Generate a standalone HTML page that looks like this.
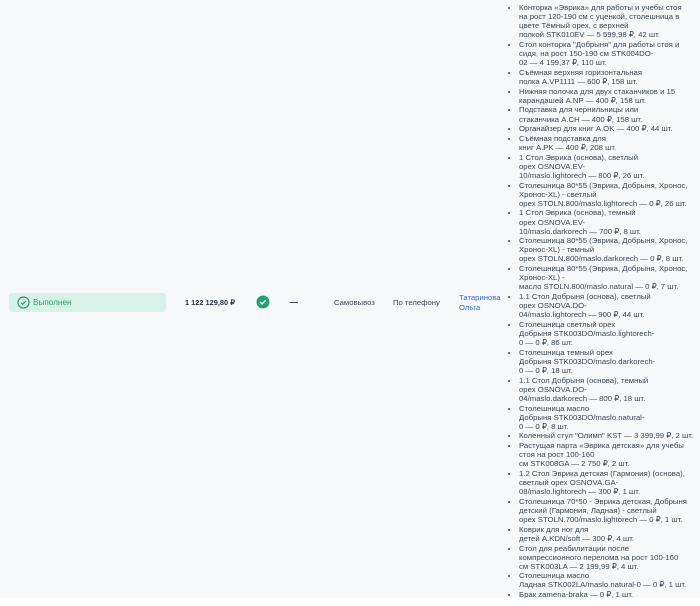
<!DOCTYPE html>
<html><head><meta charset="utf-8"><style>
html,body{margin:0;padding:0;width:700px;height:606px;overflow:hidden;background:#fff;font-family:"Liberation Sans","Noto Sans CJK SC",sans-serif;}
.row{position:absolute;left:0;top:0;width:700px;height:598px;background:#f7f8fa;overflow:hidden;}
.t{position:absolute;font-size:7.7px;color:#3b4654;white-space:nowrap;}
ul{position:absolute;left:507px;top:3px;margin:0;padding:0 0 0 12px;font-size:7.75px;line-height:9.1px;color:#3b4654;white-space:nowrap;}
li{margin:0 0 0.6px 0;}
</style></head><body>
<div class="row">
<div style="position:absolute;left:9px;top:293px;width:157px;height:19px;background:#d8f2e9;border-radius:3px;"></div>
<svg style="position:absolute;left:17px;top:296px" width="13" height="13" viewBox="0 0 13 13"><circle cx="6.5" cy="6.5" r="5.5" fill="none" stroke="#2a9d6f" stroke-width="1.2"/><path d="M4 6.7l1.7 1.7 3.3-3.4" fill="none" stroke="#2a9d6f" stroke-width="1.2"/></svg>
<div class="t" style="left:33px;top:298px;color:#2f9a6c;font-size:8.2px">Выполнен</div>
<div class="t" style="left:185px;top:298px;font-weight:bold;color:#2d3540;font-size:7.4px">1 122 129,80 ₽</div>
<svg style="position:absolute;left:256px;top:295px" width="14" height="14" viewBox="0 0 14 14"><circle cx="7" cy="7" r="6.5" fill="#27a174"/><path d="M4.3 7.1l1.9 1.8 3.5-3.6" fill="none" stroke="#fff" stroke-width="1.4"/></svg>
<div style="position:absolute;left:290px;top:302px;width:8px;height:1.3px;background:#3b4654"></div>
<div class="t" style="left:334px;top:298px">Самовывоз</div>
<div class="t" style="left:393px;top:298px">По телефону</div>
<div class="t" style="left:459px;top:293px;color:#3d6cc8;line-height:10px">Татаринова<br>Ольга</div>
<ul>
<li>Конторка «Эврика» для работы и учебы стоя<br>на рост 120-190 см с уценкой, столешница в<br>цвете Тёмный орех, с верхней<br>полкой STK010EV — 5 599,98 ₽, 42 шт.</li>
<li>Стол конторка "Добрыня" для работы стоя и<br>сидя, на рост 150-190 см STK004DO-<br>02 — 4 199,37 ₽, 110 шт.</li>
<li>Съёмная верхняя горизонтальная<br>полка A.VP1111 — 600 ₽, 158 шт.</li>
<li>Нижняя полочка для двух стаканчиков и 15<br>карандашей A.NP — 400 ₽, 158 шт.</li>
<li>Подставка для чернильницы или<br>стаканчика A.CH — 400 ₽, 158 шт.</li>
<li>Органайзер для книг A.OK — 400 ₽, 44 шт.</li>
<li>Съёмная подставка для<br>книг A.PK — 400 ₽, 208 шт.</li>
<li>1 Стол Эврика (основа), светлый<br>орех OSNOVA.EV-<br>10/maslo.lightorech — 800 ₽, 26 шт.</li>
<li>Столешница 80*55 (Эврика, Добрыня, Хронос,<br>Хронос-XL) - светлый<br>орех STOLN.800/maslo.lightorech — 0 ₽, 26 шт.</li>
<li>1 Стол Эврика (основа), темный<br>орех OSNOVA.EV-<br>10/maslo.darkorech — 700 ₽, 8 шт.</li>
<li>Столешница 80*55 (Эврика, Добрыня, Хронос,<br>Хронос-XL) - темный<br>орех STOLN.800/maslo.darkorech — 0 ₽, 8 шт.</li>
<li>Столешница 80*55 (Эврика, Добрыня, Хронос,<br>Хронос-XL) -<br>масло STOLN.800/maslo.natural — 0 ₽, 7 шт.</li>
<li>1.1 Стол Добрыня (основа), светлый<br>орех OSNOVA.DO-<br>04/maslo.lightorech — 900 ₽, 44 шт.</li>
<li>Столешница светлый орех<br>Добрыня STK003DO/maslo.lightorech-<br>0 — 0 ₽, 86 шт.</li>
<li>Столешница темный орех<br>Добрыня STK003DO/maslo.darkorech-<br>0 — 0 ₽, 18 шт.</li>
<li>1.1 Стол Добрыня (основа), темный<br>орех OSNOVA.DO-<br>04/maslo.darkorech — 800 ₽, 18 шт.</li>
<li>Столешница масло<br>Добрыня STK003DO/maslo.natural-<br>0 — 0 ₽, 8 шт.</li>
<li>Коленный стул "Олимп" KST — 3 399,99 ₽, 2 шт.</li>
<li>Растущая парта «Эврика детская» для учебы<br>стоя на рост 100-160<br>см STK008GA — 2 750 ₽, 2 шт.</li>
<li>1.2 Стол Эврика детская (Гармония) (основа),<br>светлый орех OSNOVA.GA-<br>08/maslo.lightorech — 300 ₽, 1 шт.</li>
<li>Столешница 70*50 - Эврика детская, Добрыня<br>детский (Гармония, Ладная) - светлый<br>орех STOLN.700/maslo.lightorech — 0 ₽, 1 шт.</li>
<li>Коврик для ног для<br>детей A.KDN/soft — 300 ₽, 4 шт.</li>
<li>Стол для реабилитации после<br>компрессионного перелома на рост 100-160<br>см STK003LA — 2 199,99 ₽, 4 шт.</li>
<li>Столешница масло<br>Ладная STK002LA/maslo.natural-0 — 0 ₽, 1 шт.</li>
<li>Брак zamena-braka — 0 ₽, 1 шт.</li>
</ul>
</div>
</body></html>
